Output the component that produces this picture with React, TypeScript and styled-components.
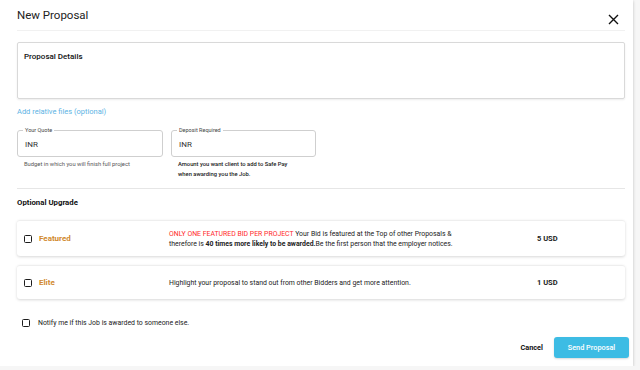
import React from "react";
import styled, { createGlobalStyle } from "styled-components";

const Global = createGlobalStyle`
  html, body { margin: 0; padding: 0; background: #f6f6f6; }
  body { font-family: Roboto, "Liberation Sans", Arial, sans-serif; color: #222; }
  * { box-sizing: border-box; }
`;

const Modal = styled.div`
  width: 633px;
  height: 366px;
  background: #fff;
  box-shadow: 0 1px 3px rgba(0, 0, 0, 0.22);
  padding: 0 8px 0 17px;
  display: flex;
  flex-direction: column;
`;

const Header = styled.div`
  display: flex;
  justify-content: space-between;
  align-items: flex-start;
  height: 31px;
  padding-top: 9px;
  border-bottom: 1px solid #f1f1f1;
`;

const Title = styled.div`
  font-size: 11.5px;
  line-height: 13px;
  color: #222;
`;

const Close = styled.button`
  border: 0;
  background: none;
  padding: 0;
  margin: 5px 6px 0 0;
  width: 11px;
  height: 11px;
  display: flex;
  cursor: pointer;
`;

const DetailsBox = styled.div`
  margin-top: 11px;
  height: 57px;
  border: 1px solid #d9d9d9;
  border-radius: 2px;
  box-shadow: 0 1px 2px rgba(0, 0, 0, 0.08);
  padding: 9px 6px;
  font-size: 8px;
  line-height: 10px;
  font-weight: 500;
  color: #111;
`;

const FilesLink = styled.a`
  margin-top: 8px;
  font-size: 7.5px;
  line-height: 10px;
  color: #5cb3e4;
  text-decoration: none;
`;

const FieldRow = styled.div`
  display: flex;
  gap: 8px;
  margin-top: 13px;
`;

const FieldCol = styled.div<{ $w: number }>`
  width: ${(p) => p.$w}px;
  display: flex;
  flex-direction: column;
`;

const FieldBox = styled.div`
  position: relative;
  height: 27px;
  padding: 0 7px;
  border: 1px solid #cfcfcf;
  border-radius: 3px;
  display: flex;
  align-items: center;
`;

const FloatLabel = styled.span`
  position: absolute;
  left: 5px;
  top: -4px;
  padding: 0 2px;
  background: #fff;
  font-size: 5.5px;
  line-height: 7px;
  color: #444;
`;

const FieldValue = styled.div`
  font-size: 8px;
  line-height: 10px;
  color: #333;
  margin-top: 3px;
`;

const Helper = styled.div<{ $strong?: boolean }>`
  margin-top: 2px;
  padding-left: 7px;
  font-size: 5.8px;
  line-height: 10px;
  color: ${(p) => (p.$strong ? "#1a1a1a" : "#555")};
  font-weight: ${(p) => (p.$strong ? 500 : 400)};
`;

const Divider = styled.div`
  margin-top: 9px;
  border-top: 1px solid #e6e6e6;
`;

const SectionTitle = styled.div`
  margin-top: 9px;
  font-size: 7.8px;
  line-height: 10px;
  font-weight: 700;
  color: #111;
`;

const Card = styled.div<{ $h: number; $mt: number }>`
  margin-top: ${(p) => p.$mt}px;
  height: ${(p) => p.$h}px;
  border-radius: 3px;
  border-top: 1px solid #eeeeee;
  box-shadow: 0 1px 3px rgba(0, 0, 0, 0.16);
  padding: 0 7px;
  display: grid;
  grid-template-columns: 15px 130px 368px 1fr;
  align-items: center;
`;

const Check = styled.span`
  display: inline-block;
  width: 8px;
  height: 8px;
  border: 1.5px solid #1c1c1c;
  border-radius: 1.5px;
`;

const Plan = styled.div`
  font-size: 8px;
  font-weight: 700;
  color: #d18a2e;
`;

const Desc = styled.div`
  font-size: 6.9px;
  line-height: 10px;
  color: #222;
`;

const Red = styled.span`
  color: #ff2a2a;
`;

const Price = styled.div`
  font-size: 7.5px;
  font-weight: 700;
  color: #222;
`;

const NotifyRow = styled.label`
  margin-top: 19px;
  display: flex;
  align-items: center;
  gap: 8px;
  padding-left: 5px;
  font-size: 6.9px;
  line-height: 10px;
  color: #222;
`;

const Footer = styled.div`
  margin-top: 9px;
  margin-right: -4px;
  display: flex;
  justify-content: flex-end;
  align-items: center;
  gap: 11px;
`;

const CancelButton = styled.button`
  border: 0;
  background: none;
  padding: 0;
  font-family: inherit;
  font-size: 7.3px;
  font-weight: 700;
  color: #111;
`;

const SendButton = styled.button`
  border: 0;
  width: 75px;
  height: 21px;
  border-radius: 3px;
  background: #3dbce4;
  box-shadow: 0 1px 2px rgba(0, 0, 0, 0.15);
  color: #fff;
  font-family: inherit;
  font-size: 7.3px;
  font-weight: 500;
`;

export default function App() {
  return (
    <>
      <Global />
      <Modal>
        <Header>
          <Title>New Proposal</Title>
          <Close aria-label="close">
            <svg width="11" height="11" viewBox="0 0 11 11">
              <path d="M1 1L10 10M10 1L1 10" stroke="#111" strokeWidth="1.4" />
            </svg>
          </Close>
        </Header>
        <DetailsBox>Proposal Details</DetailsBox>
        <FilesLink>Add relative files (optional)</FilesLink>
        <FieldRow>
          <FieldCol $w={146}>
            <FieldBox>
              <FloatLabel>Your Quote</FloatLabel>
              <FieldValue>INR</FieldValue>
            </FieldBox>
            <Helper>Budget in which you will finish full project</Helper>
          </FieldCol>
          <FieldCol $w={145}>
            <FieldBox>
              <FloatLabel>Deposit Required</FloatLabel>
              <FieldValue>INR</FieldValue>
            </FieldBox>
            <Helper $strong>
              Amount you want client to add to Safe Pay
              <br />
              when awarding you the Job.
            </Helper>
          </FieldCol>
        </FieldRow>
        <Divider />
        <SectionTitle>Optional Upgrade</SectionTitle>
        <Card $h={36} $mt={12}>
          <Check />
          <Plan>Featured</Plan>
          <Desc>
            <Red>ONLY ONE FEATURED BID PER PROJECT</Red> Your Bid is featured at the Top of other Proposals &amp;
            <br />
            therefore is <b>40 times more likely to be awarded.</b>Be the first person that the employer notices.
          </Desc>
          <Price>5 USD</Price>
        </Card>
        <Card $h={34} $mt={9}>
          <Check />
          <Plan>Elite</Plan>
          <Desc>Highlight your proposal to stand out from other Bidders and get more attention.</Desc>
          <Price>1 USD</Price>
        </Card>
        <NotifyRow>
          <Check />
          Notify me if this Job is awarded to someone else.
        </NotifyRow>
        <Footer>
          <CancelButton>Cancel</CancelButton>
          <SendButton>Send Proposal</SendButton>
        </Footer>
      </Modal>
    </>
  );
}
